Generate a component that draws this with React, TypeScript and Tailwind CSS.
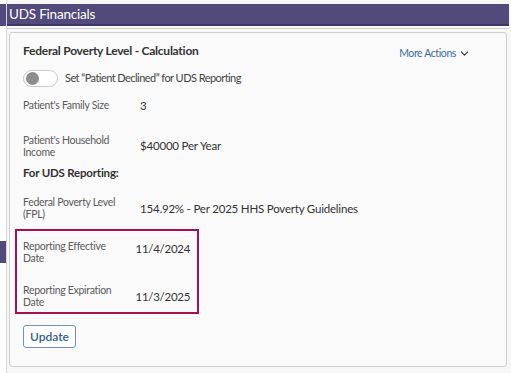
import { ChevronDown } from "lucide-react";

const font = { fontFamily: "Lato, 'Noto Sans', sans-serif" };

function Row({ label, value, className = "" }: { label: string[]; value: string; className?: string }) {
  return (
    <div className={`flex items-center ${className}`}>
      <div className="w-[117px] text-[10.5px] leading-[12px] tracking-[-0.3px] text-[#5a5a5a]">
        {label.map((l) => (
          <div key={l}>{l}</div>
        ))}
      </div>
      <div className="text-[11.5px] tracking-[-0.2px] text-[#333]">{value}</div>
    </div>
  );
}

export default function App() {
  return (
    <div className="w-[511px] h-[373px] bg-white flex overflow-hidden" style={font}>
      {/* left rail */}
      <div className="w-[6px] flex flex-col pt-[4px]">
        <div className="h-[22px] bg-[#514a7a]" />
        <div className="mt-[215px] h-[22px] bg-[#514a7a]" />
      </div>

      {/* main column */}
      <div className="flex-1 flex flex-col border-l border-[#d6d6d6] pt-[4px] pr-[2px] pb-[2px] bg-[#f7f7f7]">
        <div className="h-[22px] bg-[#514a7a] border-b-2 border-[#3e3868] flex items-center pl-[2px] text-white text-[13.5px] tracking-[-0.2px]">
          UDS Financials
        </div>
        <div className="h-[2px] mt-[1px] border-b border-[#cfcfcf]" />
        <div className="flex-1 mt-[3px] ml-[2px] mr-[2px] mb-[4px] border border-[#cfcfcf] rounded-[3px] bg-[#fafafa] pl-[13px] pt-[9px]">
          <div className="flex items-start">
            <div className="text-[12px] tracking-[-0.25px] font-bold text-[#333]">Federal Poverty Level - Calculation</div>
            <div className="ml-auto mr-[35px] mt-[4px] flex items-center text-[10.5px] tracking-[-0.4px] text-[#3b6aa3]">
              More Actions
              <ChevronDown size={13} strokeWidth={2} className="ml-[2px] text-[#333]" />
            </div>
          </div>

          <div className="flex items-center mt-[8px]">
            <div className="w-[35px] h-[17px] rounded-full border border-[#c8c8c8] bg-white flex items-center pl-[2px]">
              <div className="w-[13px] h-[13px] rounded-full bg-[#8c8c8c]" />
            </div>
            <div className="ml-[7px] text-[11px] tracking-[-0.55px] text-[#444]">Set “Patient Declined” for UDS Reporting</div>
          </div>

          <Row className="mt-[10px]" label={["Patient's Family Size"]} value="3" />
          <Row className="mt-[20px]" label={["Patient's Household", "Income"]} value="$40000 Per Year" />
          <div className="mt-[6px] text-[11.5px] tracking-[-0.2px] font-bold text-[#333]">For UDS Reporting:</div>
          <Row className="mt-[15px]" label={["Federal Poverty Level", "(FPL)"]} value="154.92% - Per 2025 HHS Poverty Guidelines" />

          <div className="mt-[9px] -ml-[8px] w-[184px] border-2 border-[#a3124f] pl-[6px] pr-[7px] pt-[9px] pb-[4px]">
            <div className="flex items-center justify-between">
              <div className="text-[10.5px] leading-[12px] tracking-[-0.3px] text-[#5a5a5a]">
                <div>Reporting Effective</div>
                <div>Date</div>
              </div>
              <div className="text-[11.5px] tracking-[-0.3px] text-[#333] -mt-[8px]">11/4/2024</div>
            </div>
            <div className="flex items-center justify-between mt-[20px]">
              <div className="text-[10.5px] leading-[12px] tracking-[-0.3px] text-[#5a5a5a]">
                <div>Reporting Expiration</div>
                <div>Date</div>
              </div>
              <div className="text-[11.5px] tracking-[-0.3px] text-[#333]">11/3/2025</div>
            </div>
          </div>

          <button className="mt-[11px] h-[23px] px-[6px] border border-[#6b93bd] rounded-[3px] bg-white text-[12px] font-semibold text-[#2f5f92]">
            Update
          </button>
        </div>
      </div>
    </div>
  );
}
